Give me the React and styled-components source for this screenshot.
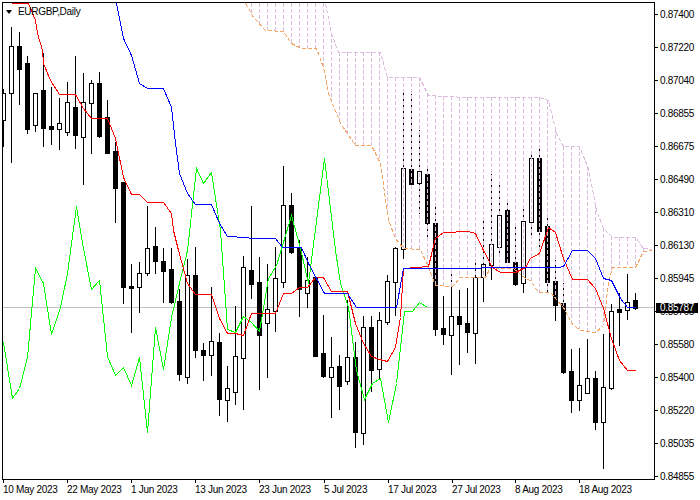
import React from 'react';
import styled, { createGlobalStyle } from 'styled-components';

const GlobalStyle = createGlobalStyle`
  html, body {
    margin: 0;
    background: #fff;
    overflow: hidden;
  }
`;

// all chart data is in page pixels: [bodyTop, bodyBottom, wickTop, wickBottom, isWhite]
const candles = [
  [93, 120, 89, 146, 1], [46, 93, 27, 162, 1], [46, 69, 32, 104, 0], [63, 129, 56, 133, 0],
  [93, 125, 93, 131, 1], [90, 128, 53, 146, 0], [126, 129, 87, 144, 0], [123, 129, 98, 149, 1],
  [102, 132, 82, 135, 1], [107, 135, 56, 148, 0], [102, 137, 73, 184, 1], [83, 103, 80, 153, 1],
  [83, 136, 72, 137, 0], [117, 153, 100, 153, 0], [151, 188, 142, 222, 0], [182, 287, 182, 303, 0],
  [286, 288, 264, 332, 0], [273, 287, 262, 312, 1], [248, 273, 206, 275, 1], [246, 261, 227, 273, 0],
  [261, 271, 248, 302, 0], [269, 302, 248, 303, 0], [301, 374, 289, 380, 0], [275, 377, 259, 383, 1],
  [275, 350, 247, 357, 0], [350, 355, 343, 380, 0], [341, 355, 287, 375, 1], [342, 399, 333, 415, 0],
  [388, 400, 366, 421, 1], [356, 392, 306, 404, 1], [267, 358, 256, 409, 1], [270, 284, 206, 298, 0],
  [282, 335, 257, 389, 0], [309, 323, 264, 377, 1], [278, 311, 247, 331, 1], [205, 282, 166, 287, 1],
  [205, 252, 193, 253, 0], [248, 289, 240, 316, 0], [280, 293, 257, 307, 1], [277, 356, 277, 356, 0],
  [353, 376, 315, 377, 0], [367, 377, 337, 417, 1], [366, 386, 355, 409, 0], [357, 381, 300, 384, 1],
  [357, 432, 342, 447, 0], [327, 433, 316, 444, 1], [327, 370, 316, 391, 0], [320, 369, 312, 378, 1],
  [281, 322, 275, 324, 1], [248, 282, 247, 315, 1], [168, 249, 89, 258, 1], [169, 184, 94, 187, 0],
  [171, 183, 130, 213, 1], [174, 223, 165, 236, 0], [223, 329, 204, 335, 0], [328, 334, 296, 344, 0],
  [316, 335, 274, 374, 1], [316, 324, 290, 364, 0], [323, 332, 288, 352, 0], [277, 333, 262, 363, 1],
  [264, 277, 218, 301, 1], [244, 265, 174, 279, 1], [215, 247, 184, 254, 1], [210, 262, 202, 262, 0],
  [262, 284, 226, 285, 0], [221, 283, 208, 292, 1], [158, 222, 154, 237, 1], [158, 231, 149, 248, 0],
  [226, 282, 215, 292, 0], [281, 305, 260, 320, 0], [303, 372, 283, 373, 0], [371, 400, 349, 412, 0],
  [385, 400, 348, 410, 1], [378, 393, 339, 393, 1], [378, 422, 371, 429, 0], [387, 422, 334, 468, 1],
  [311, 388, 304, 389, 1], [309, 312, 293, 345, 0], [302, 310, 274, 319, 1], [300, 308, 293, 309, 0],
];

const tenkan = [
  [11, 3], [28, 3], [35, 20], [37, 33], [42, 50], [43, 63], [50, 80], [59, 94], [75, 94], [83, 108],
  [91, 118], [107, 118], [115, 138], [123, 177], [131, 194], [139, 194], [147, 202], [163, 202],
  [171, 213], [173, 230], [178, 250], [187, 283], [195, 294], [211, 294], [219, 318], [227, 333],
  [235, 333], [243, 335], [251, 313], [275, 313], [283, 293], [291, 293], [299, 287], [307, 287],
  [315, 277], [323, 277], [331, 291], [347, 291], [355, 323], [363, 343], [371, 356], [379, 359],
  [387, 361], [395, 347], [400, 317], [403, 268], [428, 266], [435, 238], [443, 232], [468, 231],
  [475, 233], [483, 250], [492, 267], [500, 272], [515, 272], [525, 267], [530, 258], [539, 253],
  [548, 227], [555, 232], [563, 258], [572, 279], [587, 279], [595, 288], [603, 308], [611, 338],
  [619, 360], [627, 370], [635, 370],
];

const kijun = [
  [116, 3], [123, 38], [131, 55], [139, 83], [147, 88], [163, 88], [171, 107], [175, 143], [179, 173],
  [187, 193], [195, 204], [211, 204], [219, 223], [227, 236], [246, 237], [251, 238], [275, 238],
  [282, 247], [301, 247], [308, 263], [324, 293], [347, 293], [356, 307], [396, 307], [403, 268],
  [558, 267], [563, 266], [572, 250], [587, 250], [595, 258], [603, 278], [611, 280], [620, 298],
  [627, 307], [635, 307],
];

const chikou = [
  [3, 342], [12, 398], [19, 388], [27, 357], [35, 268], [43, 283], [51, 334], [60, 307], [67, 273],
  [76, 206], [83, 248], [91, 289], [99, 280], [107, 356], [115, 375], [123, 367], [131, 385],
  [139, 357], [147, 432], [155, 327], [163, 369], [171, 317], [179, 283], [187, 250], [196, 168],
  [203, 183], [211, 172], [220, 230], [227, 329], [235, 332], [243, 316], [251, 322], [259, 331],
  [268, 278], [276, 265], [291, 215], [300, 248], [308, 283], [324, 158], [335, 250], [340, 283],
  [348, 307], [356, 370], [364, 399], [372, 383], [380, 378], [388, 422], [396, 383], [404, 311],
  [412, 311], [419, 302], [427, 307],
];

const spanA = [
  [245, 3], [247, 6], [253, 17], [265, 30], [283, 31], [291, 43], [301, 48], [316, 48], [323, 67],
  [328, 93], [340, 123], [355, 145], [371, 145], [380, 163], [388, 220], [395, 238], [403, 248],
  [420, 249], [428, 267], [435, 285], [452, 286], [460, 277], [485, 277], [490, 267], [500, 268],
  [513, 268], [525, 278], [530, 280], [538, 292], [550, 292], [563, 307], [572, 324], [580, 330],
  [595, 332], [603, 325], [608, 282], [612, 267], [635, 267], [643, 251], [652, 250],
];

const spanB = [
  [245, -60], [325, 3], [331, 33], [338, 52], [380, 52], [387, 77], [419, 77], [428, 95], [466, 97],
  [539, 97], [548, 100], [556, 133], [563, 146], [579, 146], [588, 168], [596, 210], [603, 228],
  [612, 237], [635, 237], [643, 248], [652, 249],
];

const priceLevels = [
  '0.87400', '0.87220', '0.87040', '0.86855', '0.86675', '0.86490', '0.86310', '0.86130',
  '0.85945', '0.85765', '0.85580', '0.85400', '0.85220', '0.85035', '0.84855',
];

const timeLabels = [
  '10 May 2023', '22 May 2023', '1 Jun 2023', '13 Jun 2023', '23 Jun 2023',
  '5 Jul 2023', '17 Jul 2023', '27 Jul 2023', '8 Aug 2023', '18 Aug 2023',
];

const toPoints = (pts) => pts.map((p) => p.join(',')).join(' ');

const valueAt = (pts, x) => {
  for (let i = 1; i < pts.length; i++) {
    if (x <= pts[i][0]) {
      const [x0, y0] = pts[i - 1];
      const [x1, y1] = pts[i];
      return Math.round(y0 + ((y1 - y0) * (x - x0)) / (x1 - x0));
    }
  }
  return pts[pts.length - 1][1];
};

const Page = styled.div`
  width: 700px;
  height: 500px;
  display: grid;
  grid-template-columns: 655px 45px;
  grid-template-rows: 480px 20px;
  background: #fff;
  color: #000;
  font-family: "Liberation Sans", Arial, sans-serif;
  font-size: 10px;
  letter-spacing: -0.3px;
`;

const Plot = styled.div`
  position: relative;
  margin: 2px 0 0 2px;
  border: 1px solid #000;
  overflow: hidden;
`;

const ChartSvg = styled.svg`
  display: block;
  width: 651px;
  height: 476px;
`;

const Legend = styled.div`
  position: absolute;
  top: 2px;
  left: 3px;
  display: flex;
  align-items: center;
  gap: 6px;
  height: 12px;
`;

const LegendArrow = styled.span`
  width: 0;
  height: 0;
  margin-top: 1px;
  border-left: 3.5px solid transparent;
  border-right: 3.5px solid transparent;
  border-top: 4px solid #000;
`;

const PriceAxis = styled.div`
  position: relative;
  display: flex;
  flex-direction: column;
  gap: 20px;
  padding-top: 8px;
  box-sizing: border-box;
`;

const PriceRow = styled.div`
  display: flex;
  align-items: center;
  gap: 2px;
  height: 13px;
  line-height: 13px;

  &::before {
    content: '';
    width: 3px;
    height: 1px;
    background: #000;
  }
`;

const PriceTag = styled.div`
  position: absolute;
  top: 303px;
  left: 1px;
  width: 42px;
  height: 10px;
  padding-left: 4px;
  box-sizing: border-box;
  background: #000;
  color: #fff;
  line-height: 10px;
`;

const TimeAxis = styled.div`
  grid-column: 1 / -1;
  display: grid;
  grid-template-columns: 64px 64px 64px 64px 65px 64px 64px 63px 64px 1fr;
  padding-left: 3px;
`;

const TimeCell = styled.div`
  display: flex;
  flex-direction: column;
  white-space: nowrap;
  line-height: 13px;

  &::before {
    content: '';
    width: 1px;
    height: 3px;
    background: #000;
  }
`;

const Chart = () => (
  <ChartSvg viewBox="3 3 651 476">
    <rect x="3" y="307" width="651" height="1" fill="#c0c0c0" shapeRendering="crispEdges" />
    <g shapeRendering="crispEdges">
      {candles.map(([top, bottom, wickTop, wickBottom, isWhite], i) => {
        const x = 3 + 8 * i;
        return (
          <g key={x}>
            <rect x={x} y={wickTop} width="1" height={wickBottom - wickTop + 1} fill="#000" />
            {isWhite ? (
              <rect x={x - 1.5} y={top + 0.5} width="4" height={bottom - top} fill="#fff" stroke="#000" />
            ) : (
              <rect x={x - 2} y={top} width="5" height={bottom - top + 1} fill="#000" />
            )}
          </g>
        );
      })}
    </g>
    <g shapeRendering="crispEdges" stroke="#dcbcdc" strokeDasharray="4 2">
      {Array.from({ length: 50 }, (_, i) => {
        const x = 251 + 8 * i;
        const a = valueAt(spanA, x);
        const b = valueAt(spanB, x);
        return <line key={x} x1={x + 0.5} x2={x + 0.5} y1={Math.max(Math.min(a, b), 3)} y2={Math.max(a, b)} />;
      })}
    </g>
    <g transform="translate(0.5 0.5)" fill="none" shapeRendering="crispEdges">
      <polyline points={toPoints(spanB)} stroke="#dcbcdc" strokeDasharray="4 2" />
      <polyline points={toPoints(spanA)} stroke="#f4a460" strokeDasharray="4 2" />
      <polyline points={toPoints(chikou)} stroke="#00ff00" />
      <polyline points={toPoints(tenkan)} stroke="#ff0000" />
      <polyline points={toPoints(kijun)} stroke="#0000ff" />
    </g>
  </ChartSvg>
);

const App = () => (
  <>
    <GlobalStyle />
    <Page>
      <Plot>
        <Chart />
        <Legend>
          <LegendArrow />
          EURGBP,Daily
        </Legend>
      </Plot>
      <PriceAxis>
        {priceLevels.map((level) => (
          <PriceRow key={level}>{level}</PriceRow>
        ))}
        <PriceTag>0.85787</PriceTag>
      </PriceAxis>
      <TimeAxis>
        {timeLabels.map((label) => (
          <TimeCell key={label}>{label}</TimeCell>
        ))}
      </TimeAxis>
    </Page>
  </>
);

export default App;
